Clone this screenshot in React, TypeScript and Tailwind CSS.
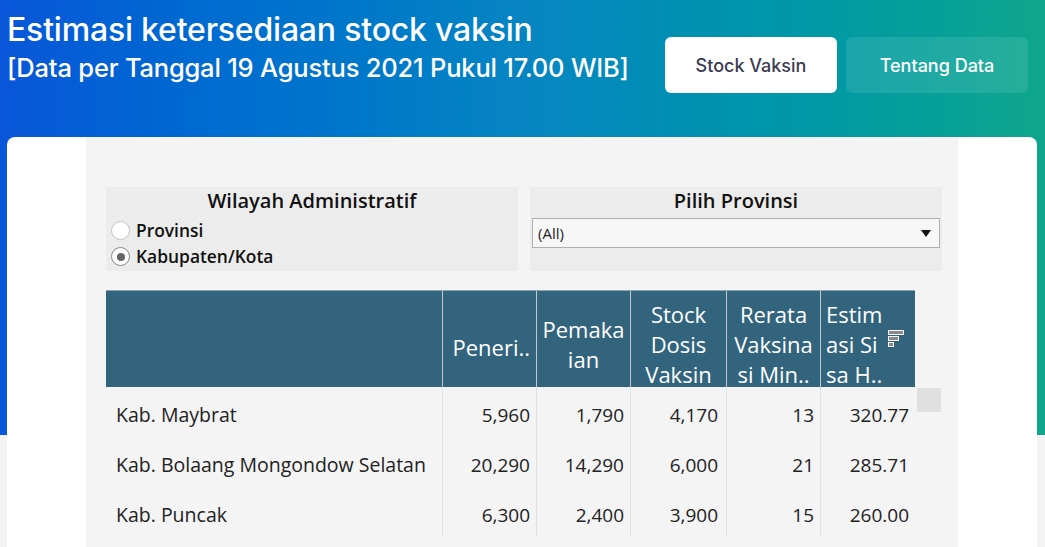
import React from "react";

interface Row {
  name: string;
  terima: string;
  pakai: string;
  stock: string;
  rerata: string;
  estimasi: string;
}

const rows: Row[] = [
  { name: "Kab. Maybrat", terima: "5,960", pakai: "1,790", stock: "4,170", rerata: "13", estimasi: "320.77" },
  { name: "Kab. Bolaang Mongondow Selatan", terima: "20,290", pakai: "14,290", stock: "6,000", rerata: "21", estimasi: "285.71" },
  { name: "Kab. Puncak", terima: "6,300", pakai: "2,400", stock: "3,900", rerata: "15", estimasi: "260.00" },
];

const cols = "grid grid-cols-[336px_94px_94px_96px_94px_95px]";

const SortIcon = () => (
  <svg width="17" height="17" viewBox="0 0 17 17" className="absolute left-[67px] top-[39px]">
    <rect x="0.5" y="0.5" width="15" height="4" fill="#8a8a8a" stroke="#fff" strokeWidth="1" />
    <rect x="0.5" y="6.5" width="10" height="4" fill="#8a8a8a" stroke="#fff" strokeWidth="1" />
    <rect x="0.5" y="12.5" width="5" height="4" fill="#8a8a8a" stroke="#fff" strokeWidth="1" />
  </svg>
);

const App = () => {
  return (
    <div className="min-h-screen bg-[#f3f3f3] relative overflow-hidden" style={{ fontFamily: "Inter, 'Noto Sans', sans-serif" }}>
      <div className="absolute left-0 top-0 w-full h-[435px] bg-gradient-to-r from-[#0a56d9] via-[#0785c2] to-[#0fa68c]" />

      <div className="relative">
        <div className="flex items-start justify-between pl-[7px] pr-[17px] h-[137px]">
          <div className="text-white pt-[9px]">
            <h1 className="text-[32px] leading-[42px] font-medium tracking-[-0.2px]">Estimasi ketersediaan stock vaksin</h1>
            <p className="text-[25.5px] leading-[34px] font-medium tracking-[-0.2px]">[Data per Tanggal 19 Agustus 2021 Pukul 17.00 WIB]</p>
          </div>
          <div className="flex gap-[9px] pt-[37px]">
            <button className="w-[172px] h-[56px] rounded-[6px] bg-white text-[#3b3b52] text-[18px] font-medium">Stock Vaksin</button>
            <button className="w-[182px] h-[56px] rounded-[6px] bg-white/10 text-white text-[18px] font-medium">Tentang Data</button>
          </div>
        </div>

        <div className="ml-[7px] mr-[8px] bg-white rounded-t-[8px] h-[420px] flex">
          <div className="ml-[79px] w-[872px] bg-[#f4f4f4] pt-[50px] pl-[20px]" style={{ fontFamily: "'Open Sans', 'Noto Sans', sans-serif" }}>
            <div className="flex gap-[12px]">
              <div className="w-[412px] h-[84px] bg-[#ececec]">
                <div className="text-center text-[20px] leading-[27px] font-semibold text-[#111]">Wilayah Administratif</div>
                <label className="flex items-center gap-[6px] pl-[5px] mt-[3px] h-[26px] text-[17.4px] font-semibold text-[#111]">
                  <span className="w-[19px] h-[19px] rounded-full border border-[#c4c4c4] bg-white" />
                  Provinsi
                </label>
                <label className="flex items-center gap-[6px] pl-[5px] h-[27px] text-[17.4px] font-semibold text-[#111]">
                  <span className="w-[19px] h-[19px] rounded-full border border-[#888] bg-white flex items-center justify-center">
                    <span className="w-[8px] h-[8px] rounded-full bg-[#666]" />
                  </span>
                  Kabupaten/Kota
                </label>
              </div>
              <div className="w-[412px] h-[84px] bg-[#ececec]">
                <div className="text-center text-[20px] leading-[27px] font-semibold text-[#111]">Pilih Provinsi</div>
                <div className="mx-[2px] mt-[4px] h-[30px] bg-[#f7f7f7] border border-[#b0b0b0] flex items-center justify-between pl-[5px] pr-[8px] text-[15px] text-[#222]">
                  <span>(All)</span>
                  <svg width="10" height="7" viewBox="0 0 10 7"><path d="M0 0h10L5 7z" fill="#111" /></svg>
                </div>
              </div>
            </div>

            <div className="mt-[19px] w-[809px] relative">
              <div className={`${cols} h-[97px] bg-[#33647e] text-white text-[22px] leading-[30px] border-t border-[#8aa5b5]`}>
                <div />
                <div className="border-l border-[#c8c8c8] flex items-center justify-end pr-[6px] pt-[14px]">Peneri..</div>
                <div className="border-l border-[#c8c8c8] text-center pt-[23px]">Pemaka<br />ian</div>
                <div className="border-l border-[#c8c8c8] text-center pt-[8px]">Stock<br />Dosis<br />Vaksin</div>
                <div className="border-l border-[#c8c8c8] text-center pt-[8px]">Rerata<br />Vaksina<br />si Min..</div>
                <div className="border-l border-[#c8c8c8] relative pl-[5px] pt-[8px]">
                  <span>Estim<br />asi Si<br />sa H..</span>
                  <SortIcon />
                </div>
              </div>
              <div className="absolute left-[811px] top-[98px] w-[24px] h-[24px] bg-[#e0e0e0]" />
              {rows.map((r) => (
                <div key={r.name} className={`${cols} h-[50px] text-[19px] text-[#222]`}>
                  <div className="pl-[10px] pt-[6px] h-full flex items-center text-[19.5px]">{r.name}</div>
                  <div className="h-full pt-[6px] border-l border-[#e2e2e2] flex items-center justify-end pr-[6px]">{r.terima}</div>
                  <div className="h-full pt-[6px] border-l border-[#e2e2e2] flex items-center justify-end pr-[6px]">{r.pakai}</div>
                  <div className="h-full pt-[6px] border-l border-[#e2e2e2] flex items-center justify-end pr-[8px]">{r.stock}</div>
                  <div className="h-full pt-[6px] border-l border-[#e2e2e2] flex items-center justify-end pr-[6px]">{r.rerata}</div>
                  <div className="h-full pt-[6px] border-l border-[#e2e2e2] flex items-center justify-end pr-[6px]">{r.estimasi}</div>
                </div>
              ))}
            </div>
          </div>
        </div>
      </div>
    </div>
  );
};

export default App;
